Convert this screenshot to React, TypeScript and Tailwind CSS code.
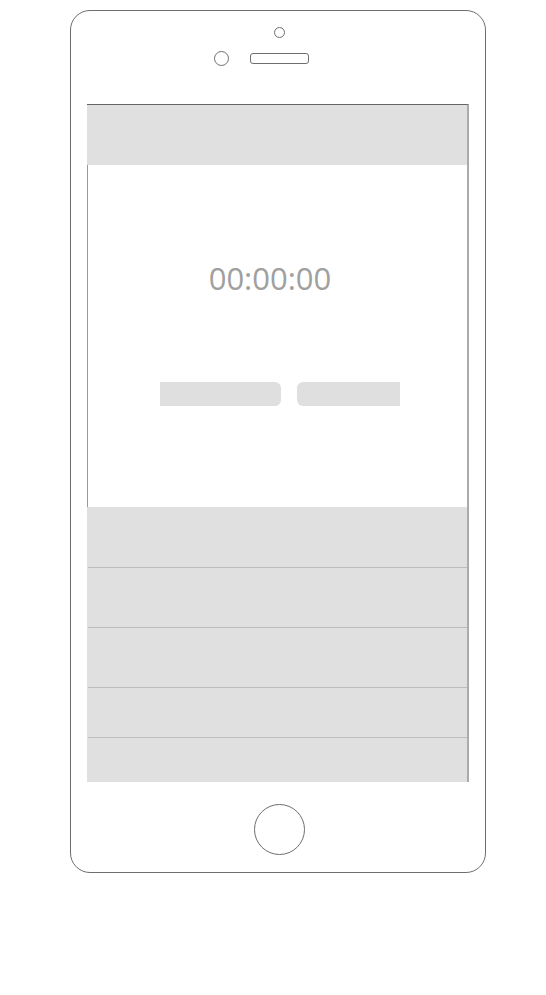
import React from "react";

const rows = [60, 60, 60, 50, 45];

export default function App() {
  return (
    <div className="w-[546px] h-[995px] bg-white" style={{ fontFamily: "'Open Sans', 'Liberation Sans', sans-serif" }}>
      <div className="ml-[70px] pt-[10px]">
        <div className="w-[416px] h-[863px] border border-[#6e6e6e] rounded-[20px] flex flex-col">
          {/* speaker + camera */}
          <div className="h-[93px] pl-[2px] flex flex-col items-center">
            <div className="mt-[16px] w-[11px] h-[11px] rounded-full border border-[#6e6e6e]" />
            <div className="mt-[13px] flex items-center gap-[21px]">
              <div className="w-[15px] h-[15px] rounded-full border border-[#6e6e6e]" />
              <div className="w-[59px] h-[11px] rounded-[3px] border border-[#6e6e6e]" />
              <div className="w-[15px] h-[15px]" />
            </div>
          </div>

          {/* screen */}
          <div className="ml-[16px] w-[382px] border-t border-t-[#666] border-r-2 border-r-[#ababab] flex flex-col">
            <div className="h-[60px] bg-[#e0e0e0]" />
            <div className="h-[342px] bg-white border-l border-l-[#9a9a9a] flex flex-col">
              <div className="pt-[93px] pr-[15px] text-center text-[31px] leading-[40px] text-[#a0a0a0]">
                00:00:00
              </div>
              <div className="mt-[84px] pl-[72px] flex gap-[16px]">
                <div className="w-[121px] h-[24px] bg-[#dfdfdf] rounded-r-[6px]" />
                <div className="w-[103px] h-[24px] bg-[#dfdfdf] rounded-l-[6px]" />
              </div>
            </div>
            <div className="flex flex-col bg-[#e0e0e0]">
              {rows.map((h, i) => (
                <div
                  key={i}
                  className={i === 0 ? "" : "border-t border-t-[#bdbdbd] ml-px"}
                  style={{ height: h }}
                />
              ))}
            </div>
          </div>

          {/* home button */}
          <div className="mt-[22px] pl-[2px] flex justify-center">
            <div className="w-[51px] h-[51px] rounded-full border border-[#6e6e6e]" />
          </div>
        </div>
      </div>
    </div>
  );
}
